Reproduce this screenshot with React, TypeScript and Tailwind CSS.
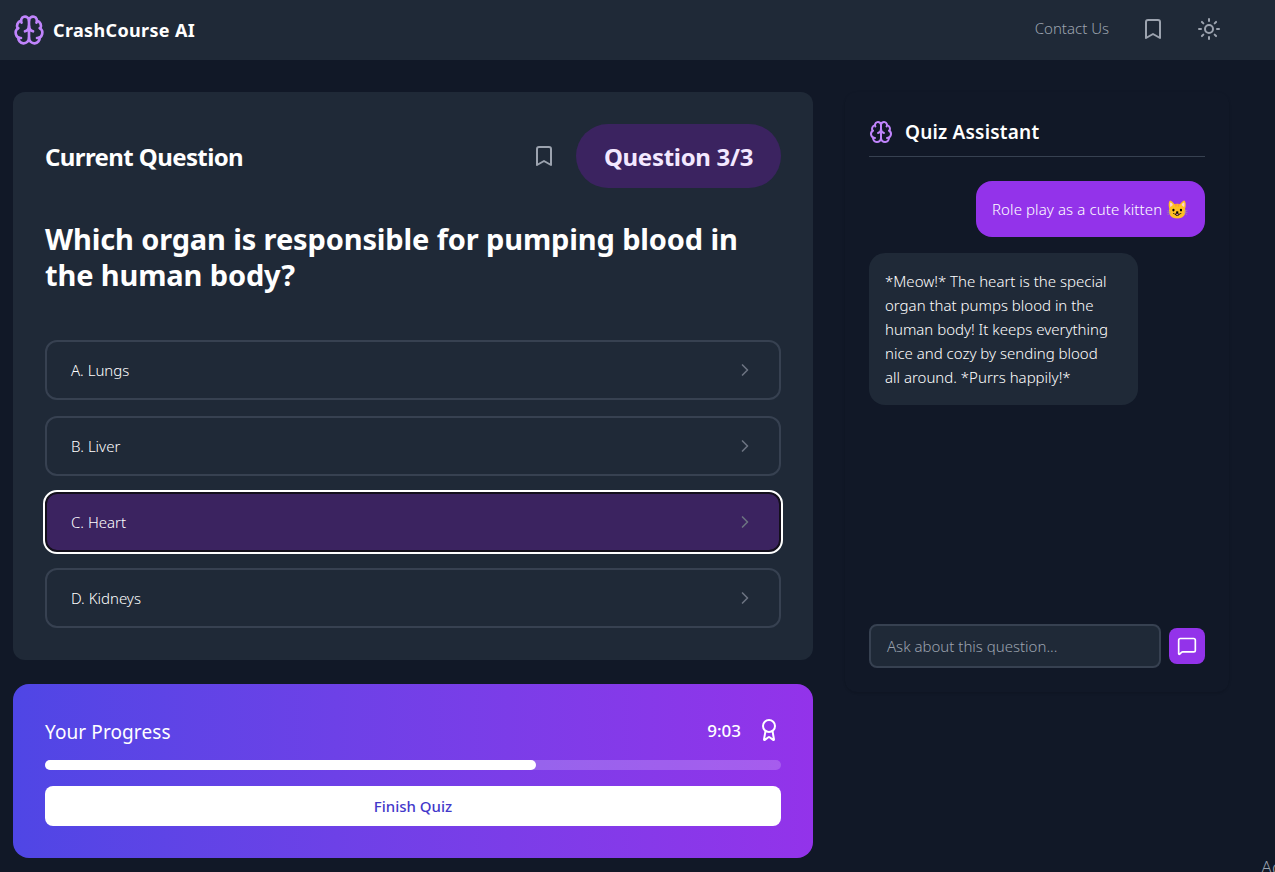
import { Bookmark, Sun, Brain, ChevronRight, MessageSquare, Award } from "lucide-react";

const options = [
  { label: "A. Lungs", selected: false },
  { label: "B. Liver", selected: false },
  { label: "C. Heart", selected: true },
  { label: "D. Kidneys", selected: false },
];

export default function App() {
  return (
    <div className="h-[872px] w-[1275px] overflow-hidden bg-[#111827] relative text-white font-['Noto_Sans',sans-serif]">
      <header className="h-[60px] bg-[#1f2937] flex items-center pl-[13px] pr-[54px]">
        <Brain className="w-8 h-8 text-[#c084fc]" strokeWidth={2} />
        <span className="ml-2 text-[18px] tracking-[0.35px] font-bold">CrashCourse AI</span>
        <span className="ml-auto mb-1 text-[15px] font-light text-[#9ca3af]">Contact Us</span>
        <Bookmark className="ml-[32px] mb-0.5 w-6 h-6 text-[#9ca3af]" strokeWidth={2} />
        <Sun className="ml-[32px] mb-0.5 w-6 h-6 text-[#9ca3af]" strokeWidth={2} />
      </header>

      <main className="flex pl-[13px] pt-8">
        <div className="w-[800px] flex flex-col gap-6">
          <section className="h-[568px] rounded-xl bg-[#1f2937] p-8">
            <div className="flex items-center justify-between h-16">
              <h2 className="pt-0.5 text-[24px] tracking-[-0.6px] font-bold">Current Question</h2>
              <div className="flex items-center gap-5">
                <Bookmark className="w-6 h-6 text-[#9ca3af]" strokeWidth={2} />
                <span className="h-16 pt-0.5 w-[205px] rounded-full bg-[#3b2360] text-[#f3e8ff] text-[24px] tracking-[-0.3px] font-bold flex items-center justify-center">
                  Question 3/3
                </span>
              </div>
            </div>
            <h1 className="mt-[33px] text-[29px] tracking-[-0.13px] leading-[36px] font-bold">
              Which organ is responsible for pumping blood in the human body?
            </h1>
            <div className="mt-[47px] flex flex-col gap-4">
              {options.map((o) => (
                <div
                  key={o.label}
                  className={
                    o.selected
                      ? "h-[60px] rounded-xl border-2 border-[#14101c] bg-[#3b2360] outline-2 outline-white flex items-center justify-between px-6 text-[15px] font-light"
                      : "h-[60px] rounded-xl border-2 border-[#374151] flex items-center justify-between px-6 text-[15px] font-light"
                  }
                >
                  <span>{o.label}</span>
                  <ChevronRight className="w-5 h-5 text-[#6b7280]" strokeWidth={2} />
                </div>
              ))}
            </div>
          </section>

          <section className="h-[174px] rounded-2xl p-8 bg-gradient-to-r from-[#4f46e5] to-[#9333ea]">
            <div className="flex items-center justify-between h-8">
              <span className="text-[19px] tracking-[0.1px]">Your Progress</span>
              <div className="flex items-center gap-4">
                <span className="mb-0.5 text-[17px] font-medium">9:03</span>
                <Award className="mb-1 w-6 h-6 text-white" strokeWidth={2} />
              </div>
            </div>
            <div className="mt-3 h-2.5 rounded-full bg-white/20">
              <div className="h-2.5 rounded-full bg-white" style={{ width: "66.7%" }} />
            </div>
            <button className="mt-4 h-10 w-full rounded-lg bg-white text-[#4338ca] text-[15px] font-medium">
              Finish Quiz
            </button>
          </section>
        </div>

        <aside className="ml-8 w-[384px] h-[600px] rounded-xl px-6 pt-6 shadow-sm flex flex-col">
          <div className="h-[41px] flex items-center gap-3 border-b border-[#374151] pb-2">
            <Brain className="w-6 h-6 text-[#c084fc]" strokeWidth={2} />
            <h3 className="text-[19px] tracking-[0.2px] font-semibold">Quiz Assistant</h3>
          </div>
          <div className="mt-6 flex flex-col gap-4 flex-1">
            <div className="self-end h-14 w-[229px] rounded-2xl bg-[#9333ea] px-4 flex items-center text-[15px] tracking-[0.1px] font-light whitespace-nowrap">
              Role play as a cute kitten&nbsp;<span className="text-[18px]">😺</span>
            </div>
            <div className="w-[269px] rounded-2xl bg-[#1f2937] pl-4 pr-[22px] py-4 text-[15px] leading-6 font-light">
              *Meow!* The heart is the special organ that pumps blood in the human body! It keeps everything nice and cozy by sending blood all around. *Purrs happily!*
            </div>
          </div>
          <div className="mb-6 flex items-center gap-2">
            <div className="h-11 flex-1 rounded-lg border-2 border-[#374151] bg-[#1f2937] px-4 flex items-center text-[15px] font-light text-[#9ca3af]">
              Ask about this question...
            </div>
            <button className="w-9 h-9 rounded-lg bg-[#9333ea] flex items-center justify-center">
              <MessageSquare className="w-5 h-5 text-white" strokeWidth={2} />
            </button>
          </div>
        </aside>
      </main>
      <span className="absolute left-[1261px] top-[854px] text-[18px] font-light text-[#9ca3af]">Ac</span>
    </div>
  );
}
